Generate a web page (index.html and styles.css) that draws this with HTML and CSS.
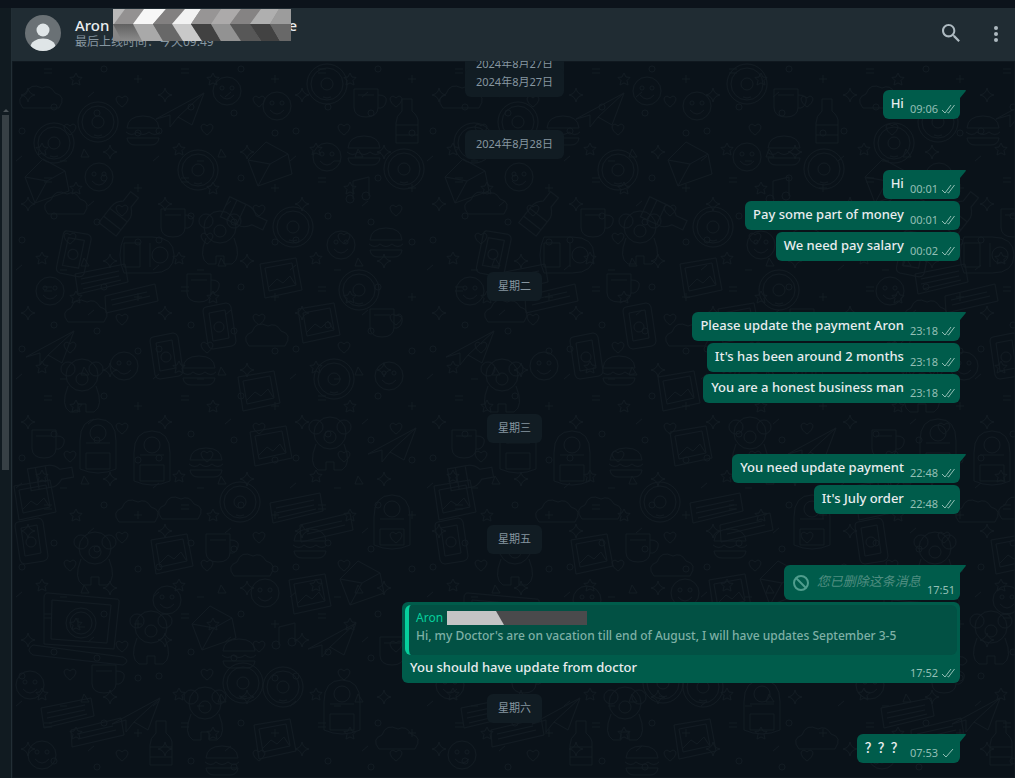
FILE: index.html
```html
<!DOCTYPE html>
<html lang="zh-CN">
  <head>
    <meta charset="UTF-8" />
    <meta name="viewport" content="width=device-width, initial-scale=1.0" />
    <title>Aron</title>
    <link rel="stylesheet" href="styles.css">
  </head>
  <body>
    <!-- shared icons -->
    <svg class="defs" aria-hidden="true">
      <symbol id="double-tick" viewBox="0 0 14 10">
        <path d="M1 6l3 3 6-8M6.500 8.500l1 .5 6-8" />
      </symbol>
      <symbol id="single-tick" viewBox="0 0 14 10">
        <path d="M2 6l3 3 7-8" />
      </symbol>
      <symbol id="tail" viewBox="0 0 8 10">
        <path d="M0 0h6q1.500 0 .8 1L1 8v2H0z" />
      </symbol>
    </svg>

    <div class="app">
      <aside class="side">
        <span class="side-arrow"></span>
        <span class="side-thumb"></span>
      </aside>

      <div class="conversation">
        <header class="header">
          <svg class="avatar" viewBox="0 0 36 36" aria-hidden="true">
            <defs><clipPath id="round"><circle cx="18" cy="18" r="18" /></clipPath></defs>
            <g clip-path="url(#round)">
              <rect width="36" height="36" fill="#6a7175" />
              <circle cx="18" cy="15" r="6.500" fill="#dfe5e7" />
              <ellipse cx="18" cy="32" rx="12.500" ry="8.500" fill="#dfe5e7" />
            </g>
          </svg>
          <div class="contact">
            <h1 class="name">
              <span>Aron</span>
              <span class="name-mask">
                <svg viewBox="0 0 178 32" preserveAspectRatio="none" aria-hidden="true">
                  <defs>
                    <linearGradient id="shade" x1="0" y1="0" x2="0" y2="1">
                      <stop offset="0" stop-color="#606060" />
                      <stop offset="1" stop-color="#8b8b8b" />
                    </linearGradient>
                  </defs>
                  <rect width="178" height="32" fill="#939191" />
                  <path d="M0 0h12L1 15H0z" fill="#b9b9b9" />
                  <path d="M0 15h178v17H0z" fill="url(#shade)" />
                  <path d="M0 15l9 17H0z" fill="#858585" />
                  <path d="M31 0h22L40 15H20z" fill="#f7f7f7" />
                  <path d="M20 15h20l10 17H29z" fill="#a9a9a9" />
                  <path d="M53 0h19L59 15H40z" fill="#828080" />
                  <path d="M40 15h19l11 17H50z" fill="#686868" />
                  <path d="M72 0h16L78 15H59z" fill="#f2f2f2" />
                  <path d="M59 15h19l11 17H70z" fill="#c9c9c9" />
                  <path d="M88 0h20L98 15H78z" fill="#979595" />
                  <path d="M78 15h20l10 17H89z" fill="#414141" />
                  <path d="M108 0h20l-11 15H98z" fill="#acaaaa" />
                  <path d="M98 15h19l11 17h-20z" fill="#929292" />
                  <path d="M128 0h20l-11 15h-20z" fill="#858383" />
                  <path d="M117 15h20l11 17h-20z" fill="#575757" />
                  <path d="M148 0h18l-9 15h-20z" fill="#afafaf" />
                  <path d="M137 15h20l10 17h-19z" fill="#424242" />
                  <path d="M166 0h12v15h-21z" fill="#9c9c9c" />
                  <path d="M157 15h21v17h-11z" fill="#686868" />
                </svg>
              </span>
              <span>e</span>
            </h1>
            <p class="status">最后上线时间：今天09:49</p>
          </div>
          <button class="icon-button" aria-label="搜索">
            <svg viewBox="0 0 24 24" width="24" height="24">
              <path fill="currentColor" d="M15.900 14.300H15l-.3-.3c1-1.100 1.600-2.700 1.600-4.300 0-3.700-3-6.700-6.700-6.700S3 6 3 9.700s3 6.700 6.700 6.700c1.600 0 3.200-.6 4.300-1.600l.3.3v.8l5.100 5.100 1.500-1.500-5-5.200zm-6.200 0c-2.600 0-4.600-2.100-4.600-4.600s2.100-4.600 4.600-4.600 4.600 2.100 4.600 4.600-2 4.600-4.600 4.600z" />
            </svg>
          </button>
          <button class="icon-button" aria-label="菜单">
            <svg viewBox="0 0 24 24" width="24" height="24">
              <g fill="currentColor">
                <circle cx="12" cy="7" r="2" />
                <circle cx="12" cy="13" r="2" />
                <circle cx="12" cy="19" r="2" />
              </g>
            </svg>
          </button>
        </header>

        <main class="chat">
          <svg class="wallpaper" aria-hidden="true">
            <defs>
              <g id="w-star"><path d="M0-7Q1-1 7 0 1 1 0 7-1 1-7 0-1-1 0-7z" /></g>
              <g id="w-star5"><path d="M0-6l2 4 4 .5-3 3 1 4.500-4-2-4 2 1-4.500-3-3 4-.5z" /></g>
              <g id="w-heart"><path d="M0 6C-10-1-5-8 0-3 5-8 10-1 0 6z" /></g>
              <g id="w-dot"><circle r="3" /></g>
              <g id="w-face"><circle r="14" /><circle cx="-5" cy="-3" r="2" /><circle cx="5" cy="-3" r="2" /><path d="M-7 4q7 8 14 0" /></g>
              <g id="w-ring"><circle r="20" /><circle r="16" /><circle r="6" /><path d="M-4 13q4 2 8 0" /></g>
              <g id="w-cards"><path d="M-26-8L24-18l3 18-50 12zM-20-3l38-8M-20 2l38-8M-18 7l38-9M4 14l50-12 3 17-52 12zM10 18l36-8M11 23l38-9" /></g>
              <g id="w-photo"><path d="M-20-16L16-22l6 32-37 8zM-15-12l27-5 4 22-27 6zM-12 8l9-9 6 4 7-7 5 8" /></g>
              <g id="w-phone"><path d="M-12-20l20-4q4 0 5 4l5 34q0 4-4 5l-19 3q-4 0-5-4l-5-34q0-4 3-4z" /><path d="M-9-14l16-3 4 28-16 3z" /><circle cx="1" r="5" /></g>
              <g id="w-cup"><path d="M-12-14h24v18q0 10-12 10t-12-10zM12-8q10 0 8 7t-8 6M-8-8h16" /></g>
              <g id="w-cloud"><path d="M-18 8q-8-10 3-14 4-12 16-6 8-4 13 5 12 3 4 15z" /></g>
              <g id="w-envelope"><path d="M-22-2L-4-20l22 12 4 20-34 12zM-22-2L0 2 18-8M0 2l-12 22" /></g>
              <g id="w-bear"><circle cx="-14" cy="-14" r="7" /><circle cx="14" cy="-14" r="7" /><circle cy="-8" r="16" /><circle cy="-4" r="6" /><path d="M-14 3q-8 20 2 26h8v-8h8v8h8q10-6 2-26" /></g>
              <g id="w-backpack"><path d="M-18 24v-28q0-22 18-22t18 22v28q-18 8-36 0zM-12-2h24M-12 8h24v16h-24z" /><circle cy="-12" r="8" /></g>
              <g id="w-laptop"><path d="M-33-30l68 6q4 0 3 4l-5 46-70-5 0-46q0-5 4-5z" /><path d="M-29-23l59 5-4 38-56-4z" /><circle r="15" /><circle r="11" /><path d="M-3-5v9h7M-48 22l90 12q8 4 0 8l-90-10q-8-5 0-10z" /></g>
              <g id="w-plane"><path d="M-24 8l48-26-12 32-14-8-8 10v-12zM-2 6l26-24" /></g>
              <g id="w-bottle"><path d="M-5-22H5v12q7 6 6 12v20h-22V2q0-7 6-12zM-11 4h22M-11 14h22" /></g>
              <g id="w-note"><path d="M-5 8V-10l16-4V5" /><circle cx="-8" cy="8" r="4" /><circle cx="8" cy="5" r="4" /></g>
              <g id="w-burger"><path d="M-16-3q1-12 16-12t16 12zM-17 1q6 5 11 0 6 5 12 0 6 5 11 0M-16 7h32q-1 7-8 7H-8q-7 0-8-7z" /></g>

              <pattern id="doodles" width="420" height="717" patternUnits="userSpaceOnUse">
                <use href="#w-cloud" x="29" y="39" />
                <use href="#w-ring" x="86" y="61" />
                <use href="#w-burger" x="131" y="70" />
                <use href="#w-plane" x="168" y="50" />
                <use href="#w-face" x="215" y="30" />
                <use href="#w-face" x="265" y="45" />
                <use href="#w-ring" x="315" y="23" />
                <use href="#w-cup" x="354" y="42" />
                <use href="#w-bottle" x="395" y="60" />
                <use href="#w-ring" x="42" y="82" />
                <use href="#w-envelope" x="35" y="118" />
                <use href="#w-face" x="87" y="116" />
                <use href="#w-ring" x="186" y="109" />
                <use href="#w-bear" x="208" y="174" />
                <use href="#w-envelope" x="258" y="101" />
                <use href="#w-face" x="315" y="96" />
                <use href="#w-burger" x="352" y="90" />
                <use href="#w-note" x="346" y="130" />
                <use href="#w-ring" x="392" y="108" />
                <use href="#w-cloud" x="54" y="145" />
                <use href="#w-bottle" x="109" y="151" transform="rotate(38 109 151)" />
                <use href="#w-bottle" x="233" y="155" transform="rotate(115 233 155)" />
                <use href="#w-cup" x="161" y="162" />
                <use href="#w-ring" x="281" y="166" />
                <use href="#w-face" x="329" y="184" />
                <use href="#w-burger" x="374" y="182" />
                <use href="#w-phone" x="60" y="193" transform="rotate(20 60 193)" />
                <use href="#w-backpack" x="136" y="194" transform="rotate(90 136 194)" />
                <use href="#w-cards" x="89" y="221" />
                <use href="#w-face" x="38" y="230" />
                <use href="#w-cup" x="187" y="227" />
                <use href="#w-photo" x="268" y="219" />
                <use href="#w-ring" x="347" y="229" />
                <use href="#w-cloud" x="74" y="253" />
                <use href="#w-phone" x="206" y="266" />
                <use href="#w-cloud" x="255" y="277" />
                <use href="#w-photo" x="306" y="264" />
                <use href="#w-cup" x="370" y="262" />
                <use href="#w-plane" x="38" y="288" />
                <use href="#w-face" x="112" y="305" />
                <use href="#w-phone" x="153" y="296" />
                <use href="#w-burger" x="187" y="310" />
                <use href="#w-bear" x="70" y="322" />
                <use href="#w-photo" x="246" y="332" />
                <use href="#w-ring" x="322" y="318" />
                <use href="#w-face" x="377" y="315" />
                <use href="#w-cup" x="32" y="383" />
                <use href="#w-backpack" x="86" y="384" />
                <use href="#w-backpack" x="140" y="396" />
                <use href="#w-burger" x="194" y="402" />
                <use href="#w-photo" x="258" y="387" />
                <use href="#w-bear" x="318" y="380" />
                <use href="#w-plane" x="380" y="385" />
                <use href="#w-bottle" x="39" y="415" transform="rotate(80 39 415)" />
                <use href="#w-photo" x="22" y="441" />
                <use href="#w-cloud" x="125" y="453" />
                <use href="#w-cloud" x="168" y="450" />
                <use href="#w-ring" x="228" y="441" />
                <use href="#w-cards" x="284" y="450" />
                <use href="#w-phone" x="18" y="481" />
                <use href="#w-bear" x="83" y="495" />
                <use href="#w-photo" x="159" y="495" />
                <use href="#w-cup" x="206" y="487" />
                <use href="#w-cloud" x="240" y="507" />
                <use href="#w-burger" x="298" y="483" />
                <use href="#w-backpack" x="380" y="460" />
                <use href="#w-face" x="155" y="539" />
                <use href="#w-face" x="253" y="532" />
                <use href="#w-photo" x="297" y="535" />
                <use href="#w-envelope" x="350" y="520" />
                <use href="#w-laptop" x="69" y="562" />
                <use href="#w-bear" x="139" y="574" />
                <use href="#w-envelope" x="202" y="565" />
                <use href="#w-burger" x="227" y="593" />
                <use href="#w-note" x="272" y="576" />
                <use href="#w-plane" x="320" y="580" />
                <use href="#w-cup" x="380" y="590" />
                <use href="#w-face" x="18" y="624" />
                <use href="#w-cup" x="92" y="618" />
                <use href="#w-ring" x="231" y="622" />
                <use href="#w-ring" x="271" y="626" />
                <use href="#w-cards" x="55" y="655" />
                <use href="#w-bear" x="193" y="650" />
                <use href="#w-plane" x="124" y="655" />
                <use href="#w-photo" x="262" y="680" />
                <use href="#w-backpack" x="330" y="645" />
                <use href="#w-bottle" x="149" y="682" />
                <use href="#w-face" x="30" y="694" />
                <use href="#w-burger" x="210" y="700" />
                <use href="#w-cloud" x="385" y="680" />
              </pattern>

              <!-- small filler between the larger doodles -->
              <pattern id="specks" width="137" height="109" patternUnits="userSpaceOnUse">
                <use href="#w-star" x="16" y="34" />
                <use href="#w-star" x="98" y="91" />
                <use href="#w-star5" x="64" y="18" />
                <use href="#w-star5" x="30" y="88" />
                <use href="#w-heart" x="110" y="40" />
                <use href="#w-heart" x="58" y="68" />
                <use href="#w-dot" x="42" y="46" />
                <use href="#w-dot" x="85" y="52" />
                <use href="#w-dot" x="126" y="72" />
                <use href="#w-dot" x="10" y="70" />
                <use href="#w-dot" x="92" y="8" />
                <path d="M32 8h8m-8 4h8M126 14v8m-4-4h8M72 88l5 8-8 0zM4 100l6-5M76 36l6-5M48 100h7" />
              </pattern>
            </defs>
            <rect width="100%" height="100%" fill="url(#specks)" />
            <rect width="100%" height="100%" fill="url(#doodles)" />
          </svg>

          <div class="day day-floating">2024年8月27日</div>

          <div class="messages">
            <div class="day">2024年8月27日</div>
            <div class="group">
              <div class="bubble first">
                <svg class="tail"><use href="#tail" /></svg>
                <p class="text">Hi</p>
                <span class="meta"><time>09:06</time><svg class="tick"><use href="#double-tick" /></svg></span>
              </div>
            </div>

            <div class="day">2024年8月28日</div>
            <div class="group">
              <div class="bubble first">
                <svg class="tail"><use href="#tail" /></svg>
                <p class="text">Hi</p>
                <span class="meta"><time>00:01</time><svg class="tick"><use href="#double-tick" /></svg></span>
              </div>
              <div class="bubble">
                <p class="text">Pay some part of money</p>
                <span class="meta"><time>00:01</time><svg class="tick"><use href="#double-tick" /></svg></span>
              </div>
              <div class="bubble">
                <p class="text">We need pay salary</p>
                <span class="meta"><time>00:02</time><svg class="tick"><use href="#double-tick" /></svg></span>
              </div>
            </div>

            <div class="day">星期二</div>
            <div class="group">
              <div class="bubble first">
                <svg class="tail"><use href="#tail" /></svg>
                <p class="text">Please update the payment Aron</p>
                <span class="meta"><time>23:18</time><svg class="tick"><use href="#double-tick" /></svg></span>
              </div>
              <div class="bubble">
                <p class="text">It's has been around 2 months</p>
                <span class="meta"><time>23:18</time><svg class="tick"><use href="#double-tick" /></svg></span>
              </div>
              <div class="bubble">
                <p class="text">You are a honest business man</p>
                <span class="meta"><time>23:18</time><svg class="tick"><use href="#double-tick" /></svg></span>
              </div>
            </div>

            <div class="day">星期三</div>
            <div class="group">
              <div class="bubble first">
                <svg class="tail"><use href="#tail" /></svg>
                <p class="text">You need update payment</p>
                <span class="meta"><time>22:48</time><svg class="tick"><use href="#double-tick" /></svg></span>
              </div>
              <div class="bubble">
                <p class="text">It's July order</p>
                <span class="meta"><time>22:48</time><svg class="tick"><use href="#double-tick" /></svg></span>
              </div>
            </div>

            <div class="day">星期五</div>
            <div class="group">
              <div class="bubble first deleted">
                <svg class="tail"><use href="#tail" /></svg>
                <svg class="ban" viewBox="0 0 18 18" aria-hidden="true">
                  <circle cx="9" cy="9" r="7" />
                  <path d="M4 4l10 10" />
                </svg>
                <p class="text">您已删除这条消息</p>
                <span class="meta"><time>17:51</time></span>
              </div>
              <div class="bubble reply">
                <blockquote class="quote">
                  <div class="quote-name">
                    <span>Aron</span>
                    <svg class="quote-mask" viewBox="0 0 140 14" preserveAspectRatio="none" aria-hidden="true">
                      <rect width="140" height="14" fill="#4a4a4c" />
                      <path d="M0 0h49l8 14H0z" fill="#c4c4c5" />
                    </svg>
                  </div>
                  <p class="quote-text">Hi, my Doctor's are on vacation till end of August, I will have updates September 3-5</p>
                </blockquote>
                <div class="reply-row">
                  <p class="text">You should have update from doctor</p>
                  <span class="meta"><time>17:52</time><svg class="tick"><use href="#double-tick" /></svg></span>
                </div>
              </div>
            </div>

            <div class="day">星期六</div>
            <div class="group">
              <div class="bubble first">
                <svg class="tail"><use href="#tail" /></svg>
                <p class="text">？？？</p>
                <span class="meta"><time>07:53</time><svg class="tick"><use href="#single-tick" /></svg></span>
              </div>
            </div>
          </div>
        </main>
      </div>
    </div>
  </body>
</html>
```

FILE: styles.css
```css
* {
  box-sizing: border-box;
}
body {
  margin: 0;
  height: 100vh;
  overflow: hidden;
  background-color: #0c131b;
  color: #e9edef;
  font-family: "Noto Sans", "Noto Sans CJK SC", sans-serif;
}
h1,
p,
blockquote {
  margin: 0;
}
.defs {
  position: absolute;
  width: 0;
  height: 0;
}
.app {
  display: flex;
  height: 100vh;
  padding-top: 8px;
}

/* left strip with the scrollbar of the chat list */
.side {
  display: flex;
  flex-direction: column;
  align-items: center;
  width: 12px;
  padding-top: 101px;
  background-color: #111b21;
  border-right: 1px solid #222e35;
}
.side-arrow {
  border: 3px solid transparent;
  border-top: 0;
  border-bottom-color: #4a5257;
}
.side-thumb {
  width: 7px;
  height: 53%;
  margin-top: 3px;
  background-color: #374045;
}

.conversation {
  flex: 1;
  display: flex;
  flex-direction: column;
  min-width: 0;
}
.header {
  display: flex;
  align-items: center;
  flex: none;
  height: 53px;
  padding: 0 7px 3px 13px;
  background-color: #202c33;
}
.avatar {
  width: 36px;
  height: 36px;
  margin-right: 14px;
}
.contact {
  flex: 1;
}
.name {
  display: flex;
  font-size: 15px;
  font-weight: 500;
  line-height: 18px;
}
.name-mask {
  position: relative;
  width: 175px;
  margin-left: 4px;
}
.name-mask svg {
  position: absolute;
  top: -7px;
  left: 0;
  width: 178px;
  height: 32px;
}
.status {
  color: #8696a0;
  font-size: 12px;
  line-height: 16px;
}
.icon-button {
  display: flex;
  margin-left: 21px;
  padding: 0;
  border: 0;
  background: none;
  color: #aebac1;
  cursor: pointer;
}

.chat {
  position: relative;
  flex: 1;
  display: flex;
  flex-direction: column;
  justify-content: flex-end;
  min-height: 0;
  padding: 0 55px 15px 57px;
  overflow: hidden;
  background-color: #0a1219;
}
.wallpaper {
  position: absolute;
  top: 0;
  left: 0;
  width: 100%;
  height: 100%;
  fill: none;
  stroke: #121b22;
}
.messages {
  position: relative;
  flex: none;
  display: flex;
  flex-direction: column;
}
.day {
  align-self: center;
  margin: 11px 0;
  padding: 0 11px 2px;
  border-radius: 6px;
  background-color: #111c23;
  color: #8696a0;
  font-size: 11px;
  line-height: 27px;
}
.day-floating {
  position: absolute;
  z-index: 1;
  top: 7px;
  margin: 0;
}
.group {
  display: flex;
  flex-direction: column;
  align-items: flex-end;
  gap: 2px;
}
.bubble {
  position: relative;
  display: flex;
  align-items: flex-end;
  min-height: 29px;
  padding: 3px 5px 3px 8px;
  border-radius: 6px;
  background-color: #005c4b;
}
.first {
  border-top-right-radius: 0;
}
.tail {
  position: absolute;
  top: 0;
  right: -7px;
  width: 8px;
  height: 10px;
  fill: #005c4b;
}
.text {
  align-self: flex-start;
  font-size: 13px;
  font-weight: 500;
  line-height: 20px;
}
.meta {
  display: flex;
  align-items: center;
  margin-left: 6px;
  color: #93bfb5;
  font-size: 11px;
  line-height: 14px;
}
.tick {
  width: 14px;
  height: 10px;
  margin-left: 3px;
  fill: none;
  stroke: #93bfb5;
}
.deleted {
  min-height: 35px;
}
.deleted .text {
  padding-top: 3px;
  color: #4f8d80;
  font-style: italic;
  font-weight: 400;
}
.ban {
  align-self: center;
  width: 18px;
  height: 18px;
  margin-right: 7px;
  fill: none;
  stroke: #4f9d8d;
  stroke-width: 2;
}
.reply {
  flex-direction: column;
  align-items: stretch;
  width: 558px;
  max-width: 100%;
  min-height: 81px;
  padding: 3px;
}
.quote {
  height: 50px;
  padding: 4px 8px 4px 7px;
  border-left: 4px solid #06cf9c;
  border-radius: 6px;
  background-color: #025144;
}
.quote-name {
  display: flex;
  align-items: center;
  gap: 4px;
  color: #06cf9c;
  font-size: 12px;
  line-height: 18px;
}
.quote-mask {
  width: 140px;
  height: 14px;
}
.quote-text {
  color: #7fb0a6;
  font-size: 12px;
  font-weight: 500;
  line-height: 18px;
}
.reply-row {
  display: flex;
  justify-content: space-between;
  align-items: flex-end;
  padding: 2px 2px 0 5px;
}
.reply-row .meta {
  padding-top: 9px;
}
```
